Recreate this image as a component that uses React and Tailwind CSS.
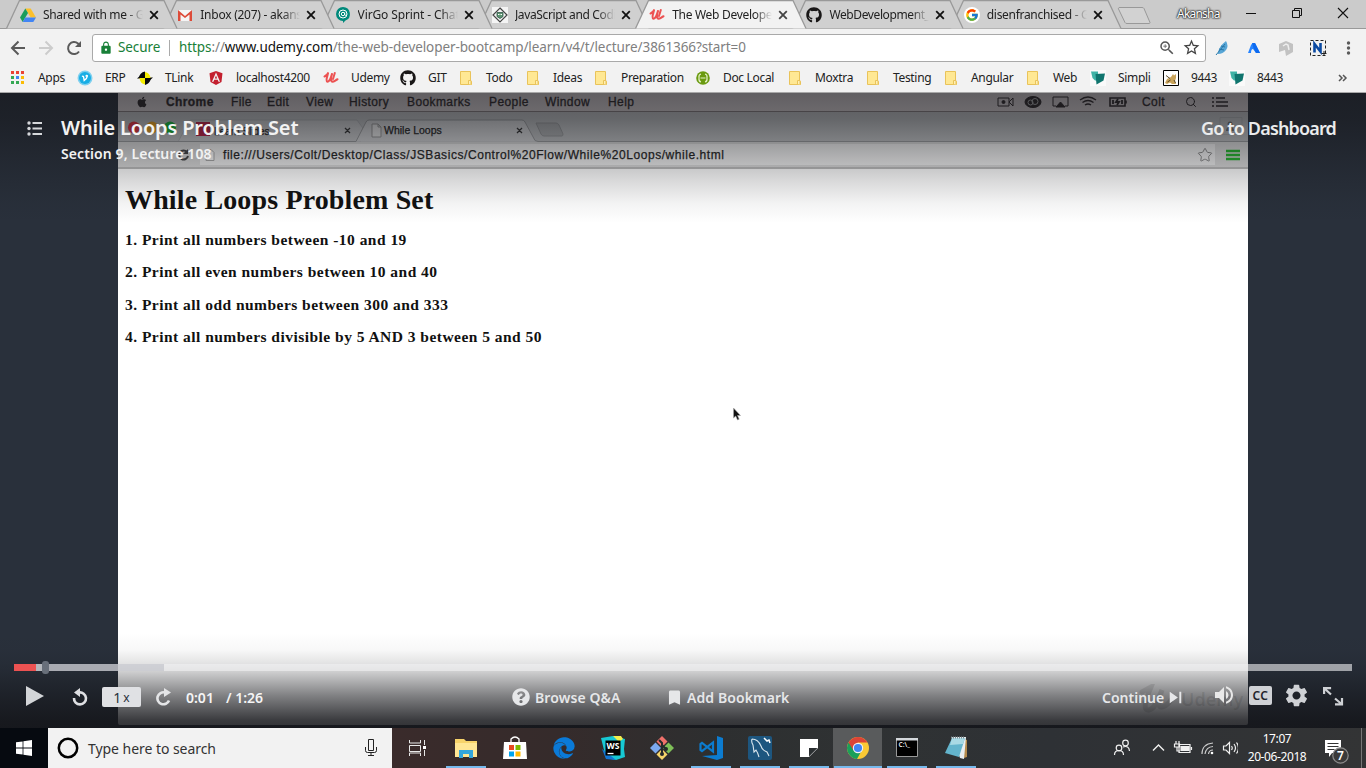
import React from "react";
import { FaGithub, FaAngular, FaQuestionCircle, FaEdge, FaApple } from "react-icons/fa";
import { FcGoogle } from "react-icons/fc";
import { MdSettings, MdBookmark, MdSkipNext, MdVolumeUp, MdZoomIn, MdStarBorder, MdLock } from "react-icons/md";
import { Search, Star } from "lucide-react";

/* ---------- small drawings ---------- */

const Drive = () => (
  <svg viewBox="0 0 16 16" className="size-4">
    <path d="M5.3 1.5h5.4L16 10.5h-5.3z" fill="#fbc02d" />
    <path d="M5.3 1.5 8 6 2.7 15 0 10.5z" fill="#1a9d5c" />
    <path d="M5.3 10.5H16L13.3 15H2.7z" fill="#4285f4" />
  </svg>
);
const Gmail = () => (
  <svg viewBox="0 0 16 16" className="size-4">
    <path d="M1 3h14v11H1z" fill="#f5f5f5" />
    <path d="M1 3 8 9l7-6v11h-2.5V7.5L8 11 3.500 7.500V14H1z" fill="#dd4b39" />
  </svg>
);
const Chat = () => (
  <svg viewBox="0 0 16 16" className="size-4">
    <path d="M8 0a7 7 0 0 1 2.500 13.500L8 16v-2A7 7 0 0 1 8 0z" fill="#00897b" />
    <circle cx="8" cy="7" r="4" fill="none" stroke="#fff" strokeWidth="1" />
    <circle cx="8" cy="7" r="1.700" fill="none" stroke="#fff" strokeWidth="1" />
    <path d="M9.700 5.500v2q.3 1.500 2 .5" fill="none" stroke="#fff" strokeWidth=".9" />
  </svg>
);
const Diamond = () => (
  <svg viewBox="0 0 16 16" className="size-4">
    <path d="M0 0h16v16H0z" fill="#f4f4f4" />
    <path d="M8 1 15 8 8 15 1 8z" fill="none" stroke="#444" strokeWidth="1.200" />
    <path d="M5 5.500h6v4l-3 2-3-2z" fill="#5c9471" stroke="#34584a" strokeWidth=".8" />
    <path d="M6 7.500h1.500M8.500 7.500H10" stroke="#fff" />
  </svg>
);
const UdemyU = () => (
  <svg viewBox="0 0 16 16" className="size-4">
    <path d="M1.500 6.500C3 5.500 4.600 4.500 5 3.200c-.8 3-2.600 8-.6 8.600 2 0 3.400-3.600 4.600-7.800-1 3-1.600 7.300.4 7.800 1.700 0 2.900-1.500 5.100-2.500" fill="none" stroke="#ec5252" strokeWidth="2.100" strokeLinecap="round" strokeLinejoin="round" />
    <path d="M11.800 3 10 9" stroke="#ec5252" strokeWidth="2" strokeLinecap="round" />
  </svg>
);
const GoogleG = () => (
  <span className="flex size-4 items-center justify-center rounded-full bg-white">
    <FcGoogle className="size-[14px]" />
  </span>
);
const Github = () => <FaGithub className="size-4 text-[#191717]" />;

const AppsGrid = () => (
  <svg viewBox="0 0 16 16" className="size-4">
    {["#ea4335", "#ea4335", "#ea4335", "#34a853", "#4285f4", "#fbbc05", "#34a853", "#34a853", "#fbbc05"].map((c, i) => (
      <rect key={i} x={1 + (i % 3) * 5} y={1 + Math.floor(i / 3) * 5} width="3" height="3" fill={c} />
    ))}
  </svg>
);
const Erp = () => (
  <svg viewBox="0 0 16 16" className="size-4">
    <circle cx="8" cy="8" r="7.500" fill="#7fd0ef" />
    <circle cx="8" cy="8" r="6" fill="#18aee5" />
    <path d="M5 6.500c1.500-1 1.500 0 2.200 4 1.500-1 3-3 3.200-4.500-.3-1-1.200-.5-1.600.5" fill="none" stroke="#fff" strokeWidth="1.400" />
  </svg>
);
const TLink = () => (
  <svg viewBox="0 0 16 16" className="size-4">
    <path d="M0 8.500 4 5v3.500zM16 7.500 12 11V7.500z" fill="#0a0a0a" />
    <path d="M8 8V2q5 1 5.500 6zM8 8v6.500Q3 13.500 2.500 8z" fill="#f5ee00" />
    <path d="M8 8V1.500Q2.500 2.500 2 8zM8 8v7q5-1.500 6-7z" fill="#0a0a0a" />
  </svg>
);
const Folder = () => (
  <svg viewBox="0 0 16 16" className="size-4">
    <path d="M2.500 1.500h10v9l1 1v3h-11z" fill="#ffe894" stroke="#e9c35a" />
    <path d="M10.500 14v-3.500h2.500v4" fill="#fff0b5" stroke="#e9c35a" />
  </svg>
);
const Doc = () => (
  <svg viewBox="0 0 16 16" className="size-4">
    <circle cx="8" cy="8" r="6.800" fill="#6a9a10" />
    <path d="M6 4Q3.500 4.500 4 8q-.5 3.500 2 4M10 4q2.500.5 2 4 .5 3.500-2 4M5.500 8h5" fill="none" stroke="#e6f3c8" strokeWidth="1.200" />
  </svg>
);
const Simpli = () => (
  <svg viewBox="0 0 16 16" className="size-4">
    <path d="M0 0h16v16H0z" fill="#fafafa" />
    <path d="M1 1.500h7v9H5L2.500 8z" fill="#3fb3a6" />
    <path d="M5.500 4 15 3.500l-1.500 7-7 4z" fill="#10756e" />
  </svg>
);
const Tomcat = () => (
  <svg viewBox="0 0 16 16" className="size-4">
    <path d="M.5.5h15v15H.5z" fill="#fff" stroke="#000" />
    <path d="M2 13l2-4 4-2 2-3 1 1.500 2-1.500v4l-1 3 1 3H9l-2-1.500L4 14z" fill="#c9a35a" />
    <path d="M3 5.500l4 3M4.500 12l3-2M11 10l1.500 3" stroke="#5c4a2a" />
  </svg>
);

/* ---------- browser chrome ---------- */

const TabShape = ({ active }) => (
  <svg viewBox="0 0 172 29" className="absolute top-0 left-0 h-[29px] w-[172px]">
    <path d="M.5 28.500 13.500.5H158L171 28.500z" fill={active ? "#f2f2f2" : "#d0d0d0"} />
    <path d="M.5 28.500 13.500.5H158L171 28.500" fill="none" stroke="#999" strokeWidth="1.300" />
  </svg>
);

const tabs = [
  { icon: <Drive />, label: "Shared with me - Google", z: "z-[7]", track: "tracking-[-0.32px]" },
  { icon: <Gmail />, label: "Inbox (207) - akansha", z: "z-[6]", track: "tracking-[-0.25px]" },
  { icon: <Chat />, label: "VirGo Sprint - Chat", z: "z-[5]", track: "tracking-[-0.12px]" },
  { icon: <Diamond />, label: "JavaScript and Coding", z: "z-[4]", track: "tracking-[-0.35px]" },
  { icon: <UdemyU />, label: "The Web Developer", z: "z-[8]", track: "tracking-[-0.3px]", active: true },
  { icon: <Github />, label: "WebDevelopment_", z: "z-[2]", track: "tracking-[-0.4px]" },
  { icon: <GoogleG />, label: "disenfranchised - Google", z: "z-[1]", track: "tracking-[-0.3px]" },
];

const Tab = ({ icon, label, z, active, track }) => (
  <div className={`relative h-[29px] w-[157.300px] shrink-0 ${z}`}>
    <TabShape active={active} />
    <div className="relative flex h-[29px] items-center pt-px pl-[14px]">
      <span className="shrink-0">{icon}</span>
      <span className={`ml-[7px] w-[101px] shrink-0 overflow-hidden whitespace-nowrap [mask-image:linear-gradient(to_right,#000_82%,transparent_99%)] ${track}`}>
        {label}
      </span>
      <svg viewBox="0 0 10 10" className="ml-[5px] size-[10px] shrink-0">
        <path d="M1.200 1.200 8.800 8.800M8.800 1.200 1.200 8.800" stroke={active ? "#444" : "#111"} strokeWidth="1.800" />
      </svg>
    </div>
  </div>
);

const TabStrip = () => (
  <div className="flex h-[29px] border-b border-[#999] bg-[#cbcbcb] pl-[6px] text-[12px] text-[#222]">
    {tabs.map((t) => (
      <Tab key={t.label} {...t} />
    ))}
    <svg viewBox="0 0 36 20" className="mt-[6px] ml-[10px] h-5 w-9 shrink-0">
      <path d="M2 1.500h23q1.500 0 2 1l6 14q0 1-1 1H10q-1.500 0-2-1L1.500 3q-.5-1 .5-1.500z" fill="#d2d2d2" stroke="#999" />
    </svg>
    <span className="mt-[5px] ml-[24px] w-[54px] shrink-0 text-[12px] leading-[18px] tracking-[-0.8px] text-white [text-shadow:0_0_2px_#000,0_0_2px_#333,0_0_2px_#333]">Akansha</span>
    <svg viewBox="0 0 110 28" className="ml-[10px] h-7 w-[110px] shrink-0" fill="none" stroke="#111">
      <path d="M5 13.500h10" />
      <path d="M51.500 10.500h7v7h-7zM53.500 10.500v-2h7v7h-2" />
      <path d="M97 8l10 10M107 8 97 18" strokeWidth="1.100" />
    </svg>
  </div>
);

const Toolbar = () => (
  <div className="flex h-[33px] items-center bg-[#f2f2f2] pt-[4px]">
    <svg viewBox="0 0 92 28" className="h-7 w-[92px] shrink-0" fill="none" strokeWidth="2">
      <path d="M25 14H12M18.500 7.500 12 14l6.500 6.500" stroke="#5a5a5a" />
      <path d="M39 14h13M45.500 7.500 52 14l-6.500 6.500" stroke="#ccc" />
      <path d="M79 17.500A6 6 0 1 1 78 9.500l1.500 1.500" stroke="#5a5a5a" />
      <path d="M81 7v6h-6z" fill="#5a5a5a" />
    </svg>
    <div className="flex h-7 w-[1114px] shrink-0 items-center rounded-[3px] border border-[#a9a9a9] bg-white pl-[6px] text-[14px]">
      <MdLock className="size-[14px] shrink-0 text-[#188038]" />
      <span className="ml-[5px] w-[51px] text-[13.500px] tracking-[-0.1px] text-[#188038]">Secure</span>
      <span className="h-4 w-px shrink-0 bg-[#aaa]" />
      <span className="ml-[9px] w-[969px] shrink-0 text-[13.500px] tracking-[-0.09px] whitespace-nowrap text-[#808080]">
        <span className="text-[#188038]">https</span>://<span className="text-[#111]">www.udemy.com</span>
        /the-web-developer-bootcamp/learn/v4/t/lecture/3861366?start=0
      </span>
      <MdZoomIn className="ml-[10px] size-[18px] shrink-0 text-[#555]" />
      <MdStarBorder className="ml-[6px] size-[19px] shrink-0 text-[#444]" />
    </div>
    <svg viewBox="0 0 160 28" className="h-7 w-[160px] shrink-0">
      <path d="M20 7q3 5 0 9-3 4-8 4 0-7 8-13z" fill="#58a6d6" />
      <path d="M10 21 19 10M13 15l5 1M15 12l4 1" stroke="#2877a8" fill="none" />
      <path d="M42 19l3-8q1-2 3-2h1l5 10h-4l-3-4q-2 0-2 4z" fill="#2684ff" />
      <path d="M46 9h3l5 10h-4l-2.500-5z" fill="#0d6af0" />
      <path d="M80 7l7 3v8l-7 4-1-6-6 2v-8z" fill="#c2c2c2" />
      <path d="M77 12l3-2 2 1 1 5" stroke="#eee" strokeWidth="1.500" fill="none" />
      <path d="M104.500 6.500h15v15h-15z" fill="none" stroke="#222" strokeDasharray="3 2" />
      <path d="M108.500 18.500V10l6 7.500V9" fill="none" stroke="#0b4aa2" strokeWidth="2.600" />
      <path d="M118 17v5M115.500 19.500h5" stroke="#222" />
      <g fill="#5a5a5a">
        <circle cx="142.500" cy="9" r="1.700" />
        <circle cx="142.500" cy="14" r="1.700" />
        <circle cx="142.500" cy="19" r="1.700" />
      </g>
    </svg>
  </div>
);

const bookmarks = [
  [<AppsGrid />, "Apps", "w-[67px]"],
  [<Erp />, "ERP", "w-[60px]"],
  [<TLink />, "TLink", "w-[71px]"],
  [<FaAngular className="size-4 text-[#c3202f]" />, "localhost4200", "w-[115px]"],
  [<UdemyU />, "Udemy", "w-[77px]"],
  [<Github />, "GIT", "w-[58px]"],
  [<Folder />, "Todo", "w-[67px]"],
  [<Folder />, "Ideas", "w-[68px]"],
  [<Folder />, "Preparation", "w-[102px]"],
  [<Doc />, "Doc Local", "w-[92px]"],
  [<Folder />, "Moxtra", "w-[78px]"],
  [<Folder />, "Testing", "w-[78px]"],
  [<Folder />, "Angular", "w-[82px]"],
  [<Folder />, "Web", "w-[65px]"],
  [<Simpli />, "Simpli", "w-[73px]"],
  [<Tomcat />, "9443", "w-[66px]"],
  [<Simpli />, "8443", "w-[109px]"],
];

const BookmarkBar = () => (
  <div className="flex h-[31px] items-center border-b border-[#a8a8a8] bg-[#f2f2f2] pt-[2px] pl-[10px] text-[12px] text-[#222]">
    {bookmarks.map(([icon, label, w], i) => (
      <div key={i} className={`flex shrink-0 items-center gap-3 whitespace-nowrap ${w}`}>
        <span className="shrink-0">{icon}</span>
        <span className="tracking-[-0.33px]">{label}</span>
      </div>
    ))}
    <svg viewBox="0 0 10 8" className="h-2 w-[10px]" fill="none" stroke="#555" strokeWidth="1.500">
      <path d="M1 1l3 3-3 3M5 1l3 3-3 3" />
    </svg>
  </div>
);

/* ---------- lecture recording ---------- */

const MacMenu = () => (
  <div className="flex h-[19px] items-center border-b border-[#8a8083] bg-[#ded6d8] pl-[18px] text-[12px] tracking-[0.4px] text-[#2b2527] [-webkit-text-stroke:0.3px_#2b2527]">
    <FaApple className="size-3" />
    <span className="ml-[18px] w-[65px] font-bold">Chrome</span>
    <span className="w-[36px]">File</span>
    <span className="w-[39px]">Edit</span>
    <span className="w-[43px]">View</span>
    <span className="w-[58px]">History</span>
    <span className="w-[82px]">Bookmarks</span>
    <span className="w-[56px]">People</span>
    <span className="w-[63px]">Window</span>
    <span className="w-[389px]">Help</span>
    <svg viewBox="0 0 134 16" className="h-4 w-[134px]" fill="none" stroke="#2b2527">
      <path d="M1 4h11v8H1zM12 8l4-4v8l-4-4" />
      <circle cx="6.500" cy="8" r="1.500" fill="#2b2527" />
      <ellipse cx="36" cy="8" rx="8" ry="5.500" fill="#2b2527" />
      <circle cx="33.500" cy="8.500" r="2.500" stroke="#bbb" />
      <circle cx="38" cy="7.500" r="3" stroke="#bbb" />
      <path d="M59 12h-3V3h15v9h-3" />
      <path d="M59 13l4.500-5 4.500 5z" fill="#2b2527" />
      <path d="M83 6q8-6 16 0M85.500 8.500q5.500-4 11 0M88 11q3-2 6 0" strokeWidth="1.400" />
      <path d="M113 4h15v8h-15zM129 6.500v3" strokeWidth="1.600" />
      <path d="M116 6v4M121 5l-2 3h3l-2 3M125 6v4" strokeWidth="1.800" />
    </svg>
    <span className="ml-[11px] w-[43px]">Colt</span>
    <Search className="size-3" />
    <svg viewBox="0 0 18 12" className="ml-[14px] h-3 w-[18px]" stroke="#2b2527" strokeWidth="1.500">
      <path d="M1 2h2M5 2h9M1 6h2M5 6h12M1 10h2M5 10h12" />
    </svg>
  </div>
);

const MacTabs = () => (
  <div className="relative h-[30px] bg-[#c4c6c8]">
    <svg viewBox="0 0 1130 30" className="absolute inset-0 h-[30px] w-[1130px]">
      <path d="M60 30 71 9q1-1 3-1h165l8 11-5 11z" fill="#cfd0d2" stroke="#b3b5b8" />
      <path d="M0 29.500h238L248 10q1-2 3-2h153q2 0 3 2l10 18.500 3 1h710" fill="#d9dadc" stroke="#9c9ea0" />
      <path d="M418 11h20q2 0 3 2l4 9q0 2-1 2h-18q-2 0-3-2z" fill="#b2b4b6" stroke="#9c9ea0" />
      <circle cx="16" cy="15.500" r="6" fill="#ef3340" />
      <circle cx="34" cy="15.500" r="6" fill="#f5a91e" />
      <circle cx="52" cy="15.500" r="6" fill="#12bf38" />
      <path d="M78 10h14v14H78z" fill="#c41f45" />
      <path d="M254 12h6l3 3v10h-9zM260 12v3h3" fill="#eee" stroke="#999" />
      <path d="M227 16l5 5M232 16l-5 5M399 16l5 5M404 16l-5 5" stroke="#333" strokeWidth="1.300" />
      <path d="M1102 5.500h22v17h-22z" fill="none" stroke="#b3b5b7" />
      <path d="M1108 19q0-4 4-4t4 4z" fill="#777" />
      <circle cx="1112" cy="12" r="2.500" fill="#777" />
    </svg>
    <div className="relative flex h-[30px] items-center pt-[8px] text-[10.500px] text-[#222] [-webkit-text-stroke:0.25px_#222]">
      <span className="ml-[96px] w-[170px] text-[10px]">Learn Slides</span>
      <span>While Loops</span>
    </div>
  </div>
);

const MacAddress = () => (
  <div className="flex h-[27px] items-center border-b-2 border-[#bcbcbc] bg-[#dcdcdc] pl-[22px]">
    <svg viewBox="0 0 60 16" className="h-4 w-[60px] shrink-0" fill="none" stroke="#c4c4c4" strokeWidth="2">
      <path d="M10 4 6 8l4 4M6 8h8M25 4l4 4-4 4M29 8h-8" />
      <path d="M47 5a4.500 4.500 0 1 0 1 4" stroke="#444" />
      <path d="M48 2v5h-5z" fill="#444" stroke="none" />
    </svg>
    <div className="flex h-[21px] w-[1015px] shrink-0 items-center bg-[#f2f2f2] pl-[5px]">
      <svg viewBox="0 0 10 12" className="h-3 w-[10px] shrink-0">
        <path d="M1 .5h5l3 3v8H1z" fill="#fff" stroke="#aaa" />
      </svg>
      <span className="ml-[8px] w-[974px] shrink-0 text-[12px] tracking-[0.56px] text-[#222] [-webkit-text-stroke:0.25px_#222]">
        file:///Users/Colt/Desktop/Class/JSBasics/Control%20Flow/While%20Loops/while.html
      </span>
      <Star className="size-4 shrink-0 text-[#888]" strokeWidth={1.5} />
    </div>
    <svg viewBox="0 0 14 12" className="ml-[11px] h-3 w-[14px] shrink-0" stroke="#24b52e" strokeWidth="2.500">
      <path d="M0 2h14M0 6h14M0 10h14" />
    </svg>
  </div>
);

const Recording = () => (
  <div className="h-[632px] w-[1130px] overflow-hidden rounded-b-[2px] bg-white font-['Liberation_Sans',Arial,sans-serif]">
    <MacMenu />
    <MacTabs />
    <MacAddress />
    <div className="pt-[13px] pl-[7px] font-['Liberation_Serif','Times_New_Roman',serif] font-bold text-[#111]">
      <h1 className="h-[48px] text-[28px] leading-[36px] tracking-[0.140px]">While Loops Problem Set</h1>
      <p className="h-[32.300px] text-[15.500px] leading-[20px] tracking-[0.47px]">1. Print all numbers between -10 and 19</p>
      <p className="h-[32.300px] text-[15.500px] leading-[20px] tracking-[0.47px]">2. Print all even numbers between 10 and 40</p>
      <p className="h-[32.300px] text-[15.500px] leading-[20px] tracking-[0.47px]">3. Print all odd numbers between 300 and 333</p>
      <p className="h-[32.300px] text-[15.500px] leading-[20px] tracking-[0.47px]">4. Print all numbers divisible by 5 AND 3 between 5 and 50</p>
    </div>
    <svg viewBox="0 0 10 14" className="mt-[48px] ml-[614px] h-[14px] w-[10px]">
      <path d="M1.500 1v10l2.200-2 1.800 4 1.700-.8-1.700-3.700h3z" fill="#111" stroke="#aaa" strokeWidth=".6" />
    </svg>
  </div>
);

/* ---------- player overlay ---------- */

const PlayerHeader = () => (
  <div className="flex h-[75px] justify-between pt-[23px] pr-[30px] pl-[27px]">
    <div className="flex">
      <svg viewBox="0 0 16 15" className="mt-[5px] h-[15px] w-4" fill="#d6d8db">
        <circle cx="2" cy="2" r="1.700" />
        <circle cx="2" cy="7.500" r="1.700" />
        <circle cx="2" cy="13" r="1.700" />
        <path d="M5.500 1H15v2H5.500zM5.500 6.500H15v2H5.500zM5.500 12H15v2H5.500z" />
      </svg>
      <div className="ml-[18px] whitespace-nowrap">
        <div className="text-[20px] leading-[24px] font-semibold tracking-[-0.17px] text-[#f2f2f2]">While Loops Problem Set</div>
        <div className="mt-[4px] text-[14px] leading-[20px] font-semibold tracking-[0.1px] text-[#f2f2f2]">Section 9, Lecture 108</div>
      </div>
    </div>
    <div className="text-[18px] leading-[24px] font-semibold tracking-[-0.84px] whitespace-nowrap text-[#eaebec]">Go to Dashboard</div>
  </div>
);

const Progress = () => (
  <div className="flex h-[13px] items-center px-[14px]">
    <div className="h-[7px] w-[22px] bg-[#ec5252]" />
    <div className="h-[7px] w-[6px] bg-[#b4b7bc]" />
    <div className="h-[13px] w-[7px] rounded-[3px] bg-[#686f7a]" />
    <div className="h-[7px] w-[115px] bg-[#caccd2]/80" />
    <div className="h-[7px] flex-1 bg-[#f2f2f4]/60" />
  </div>
);

const Controls = () => (
  <div className="flex h-10 items-center pl-[25px] text-[14px] font-semibold whitespace-nowrap text-[#e6e7e9]">
    <svg viewBox="0 0 20 20" className="-mt-[2px] size-5 shrink-0" fill="#d3d5d8">
      <path d="M1 0v20l18-10z" />
    </svg>
    <svg viewBox="0 0 18 18" className="ml-[26px] size-[18px] shrink-0" fill="none" stroke="#dedfe2" strokeWidth="2.600">
      <path d="M8 4.500A6 6 0 1 1 3 10" />
      <path d="M9 0v9L3 4.500z" fill="#dedfe2" stroke="none" />
    </svg>
    <div className="ml-[13px] flex h-5 w-[39px] shrink-0 items-center justify-center rounded-[2px] bg-[#e0e1e4] text-[14px] font-normal text-[#29303b]">
      1<span className="ml-[2px] pt-[2px] text-[12px]">x</span>
    </div>
    <svg viewBox="0 0 18 18" className="ml-[14px] size-[18px] shrink-0" fill="none" stroke="#e4e5e7" strokeWidth="2.600">
      <path d="M10 4.500A6 6 0 1 0 14 12.500" />
      <path d="M9 0v9l7-4.500z" fill="#e4e5e7" stroke="none" />
    </svg>
    <span className="ml-[13px] w-[40px] text-[#f5f5f5]">0:01</span>
    <span className="w-[286px] text-[#f5f5f5]">/ 1:26</span>
    <FaQuestionCircle className="size-[18px] shrink-0" />
    <span className="ml-[5px] w-[130px] tracking-[0.1px]">Browse Q&amp;A</span>
    <MdBookmark className="size-[19px] shrink-0" />
    <span className="ml-[3px] w-[415px] tracking-[0.1px]">Add Bookmark</span>
    <span className="w-[62px]">Continue</span>
    <MdSkipNext className="size-[23px] shrink-0" />
    <span className="w-[25px]" />
    <MdVolumeUp className="-mt-[4px] size-6 shrink-0 text-[#e8e8e8]" />
    <div className="-mt-[3px] ml-[13px] flex h-[19px] w-[23px] shrink-0 items-center justify-center rounded-[2px] bg-[#cfd1d5] text-[12px] leading-none tracking-[0.5px] text-[#1f232a]">CC</div>
    <MdSettings className="-mt-[3px] ml-[11px] size-[27px] shrink-0 text-[#cfd1d5]" />
    <svg viewBox="0 0 22 20" className="-mt-[3px] ml-[12px] h-5 w-[22px] shrink-0" fill="none" stroke="#cfd1d5" strokeWidth="2.200">
      <path d="M2.100 8V2.100h7M2.500 2.500 9 8.500M20 12v6.400h-7M19.500 18 13 12.500" />
    </svg>
  </div>
);

const Player = () => (
  <div className="relative h-[635px] overflow-hidden bg-[#29303b]">
    <div className="flex justify-center">
      <Recording />
    </div>
    <div className="absolute inset-0 flex flex-col justify-between">
      <div className="h-[130px] bg-[linear-gradient(to_bottom,rgba(20,21,25,.62)_0%,rgba(20,21,25,.54)_20%,rgba(20,21,25,.29)_50%,rgba(20,21,25,.16)_68%,rgba(20,21,25,.05)_85%,transparent)]">
        <PlayerHeader />
      </div>
      <div className="h-[95px] bg-[linear-gradient(to_bottom,transparent,rgba(20,21,25,.03)_18%,rgba(20,21,25,.12)_32%,rgba(20,21,25,.2)_40%,rgba(20,21,25,.54)_66%,rgba(20,21,25,.84)_92%,rgba(20,21,25,.88))] pt-[28px]">
        <Progress />
        <div className="relative">
          <div className="absolute top-[10px] left-[1139px] flex items-center gap-[8px] text-[18px] font-semibold text-black/10">
            <svg viewBox="0 0 34 30" className="h-[30px] w-[34px]" fill="none" stroke="currentColor" strokeWidth="5" strokeLinecap="round">
              <path d="M3 8 12 3C7 15 3 27 10 26S20 12 23 6c-3 9-5 18 0 17q5-1 9-7" />
            </svg>
            Udemy
          </div>
          <div className="relative pt-[3px]">
            <Controls />
          </div>
        </div>
      </div>
    </div>
  </div>
);

/* ---------- taskbar ---------- */

const apps = [
  {
    icon: (
      <g fill="none" stroke="#e8e8e8">
        <path d="M8.500 8v3h11V8M8.500 24v-3h11v3M8.500 13.500h11v6h-11zM23.500 8v5M23.500 18v6" />
        <path d="M22 14h3v3h-3z" fill="#fff" stroke="none" />
      </g>
    ),
  },
  {
    run: true,
    icon: (
      <g>
        <path d="M5 7h9l2 2h11v16H5z" fill="#f7d36a" />
        <path d="M5 11h22v14H5z" fill="#ffe694" />
        <path d="M9 26v-8h14v8h-4v-4h-6v4z" fill="#33a6dc" />
      </g>
    ),
  },
  {
    icon: (
      <g>
        <path d="M12 11V7q4-4 8 0v4" fill="none" stroke="#fff" strokeWidth="1.300" />
        <path d="M5 10h22l1 17H4z" fill="#fff" />
        <path d="M10 13h5v5h-5z" fill="#e64a22" />
        <path d="M16.500 13h5v5h-5z" fill="#7fba00" />
        <path d="M10 19.500h5v5h-5z" fill="#00a4ef" />
        <path d="M16.500 19.500h5v5h-5z" fill="#ffb900" />
      </g>
    ),
  },
  { edge: true },
  {
    icon: (
      <g>
        <path d="M4 6 16 4l12 3-1 10 1 8-9 3-10-2z" fill="#17c9d4" />
        <path d="M16 4h8l2 3-4 3z" fill="#f3ee4e" />
        <path d="M5 17 9 27l10 1z" fill="#1276d6" />
        <path d="M8.500 8.500h15v15h-15z" fill="#000" />
        <path d="M10.500 21.500h6" stroke="#fff" strokeWidth="1.300" />
        <text x="9.500" y="17" fontSize="8.500" fontWeight="700" fill="#fff">WS</text>
      </g>
    ),
  },
  {
    icon: (
      <g>
        <path d="M16 4l5.500 5.500L16 15l-5.500-5.500z" fill="#f0716b" />
        <path d="M9.500 10.500 15 16l-5.500 5.500L4 16z" fill="#7ba9f0" />
        <path d="M22.500 10.500 28 16l-5.500 5.500L17 16z" fill="#7fbf58" />
        <path d="M16 17l5.500 5.500L16 28l-5.500-5.500z" fill="#f7d56a" />
        <path d="M13 8l3 3v11M16 13l4 4" fill="none" stroke="#26292b" strokeWidth="2" />
        <circle cx="16" cy="22" r="2" fill="#26292b" />
        <circle cx="20" cy="17" r="2" fill="#26292b" />
      </g>
    ),
  },
  {
    run: true,
    icon: (
      <g>
        <path d="M22 4l6 2v20l-6 2-15-4 15-1z" fill="#0c7cd0" />
        <path d="M18 10.500v9L7 10.800 5.500 12v6L7 19.200z" fill="none" stroke="#0c7cd0" strokeWidth="2.200" />
      </g>
    ),
  },
  {
    run: true,
    icon: (
      <g>
        <rect x="4" y="4" width="24" height="24" rx="2" fill="#1d567f" />
        <path d="M8 7q6 0 9 7 1 4 6 6l2 4M8 7q-1 3 1 6l1 7 2-2q2 3 3 7" fill="none" stroke="#d9e6ee" strokeWidth="1.100" />
        <path d="M20 6l3 3 2-1 1 3" stroke="#fff" strokeWidth="1.500" fill="none" />
      </g>
    ),
  },
  {
    run: true,
    icon: (
      <g>
        <path d="M7 7h18v9l-9 9H7z" fill="#fff" />
        <path d="M16 16h8.500L16 24.500z" fill="#2b2f31" />
      </g>
    ),
  },
  {
    run: true,
    active: true,
    icon: (
      <g>
        <circle cx="16" cy="16" r="11" fill="#fbc934" />
        <path d="M6.500 10.500A11 11 0 0 0 15 27l5-9-4-2z" fill="#1b9f5a" />
        <path d="M6.500 10.500A11 11 0 0 1 25.500 10.500H16l-4.500 8z" fill="#dc4437" />
        <circle cx="16" cy="16" r="5.200" fill="#f4f4f4" />
        <circle cx="16" cy="16" r="4.100" fill="#4285f4" />
      </g>
    ),
  },
  {
    run: true,
    icon: (
      <g>
        <path d="M5.500 6.500h21v18h-21z" fill="#000" stroke="#999" />
        <path d="M5 6h22v2.500H5z" fill="#d4d8dc" />
        <text x="7.500" y="15" fontSize="6.500" fontWeight="700" fill="#ddd">C:\_</text>
      </g>
    ),
  },
  {
    run: true,
    icon: (
      <g>
        <path d="M24 7l3 1v17l-3 1z" fill="#b48a4c" />
        <path d="M12 5h14l-2 22-4-1z" fill="#e9eef0" />
        <path d="M12 6h13l-6 19L5 21z" fill="#63b4cc" />
        <path d="M12 6h13l-2 6-13 1z" fill="#a9d9e4" />
        <path d="M11 5.500h14" stroke="#7b8a90" strokeDasharray="1 1" strokeWidth="2" />
      </g>
    ),
  },
];

const TaskApp = ({ icon, run, active, edge }) => (
  <div className={`flex h-10 w-[49px] shrink-0 flex-col items-center justify-between ${active ? "bg-[#595b5c]" : ""}`}>
    {edge ? (
      <FaEdge className="mt-[9px] size-[22px] text-[#0a7ad8]" />
    ) : (
      <svg viewBox="0 0 32 32" className="mt-[4px] size-8">{icon}</svg>
    )}
    <div className={`h-[2px] ${active ? "w-[48px]" : "w-10"} ${run ? "bg-[#76b9ed]" : ""}`} />
  </div>
);

const Taskbar = () => (
  <div className="flex h-10 bg-[linear-gradient(to_right,#3a2b2b_392px,#352b2b_560px,#2d2f30_720px,#2f3233_860px,#2e3135_1050px,#333435_1366px)]">
    <div className="flex w-12 shrink-0 items-center justify-center bg-[#060a10]">
      <svg viewBox="0 0 16 16" className="size-4" fill="#fff">
        <path d="M0 2.300 6.600 1.400v6.200H0zM7.400 1.300 16 0v7.600H7.400zM0 8.400h6.600v6.200L0 13.700zM7.400 8.400H16V16l-8.600-1.200z" />
      </svg>
    </div>
    <div className="flex w-[344px] shrink-0 items-center bg-[#f2f2f2] pl-[9px]">
      <svg viewBox="0 0 22 22" className="size-[22px]" fill="none" stroke="#000" strokeWidth="2.500">
        <circle cx="11" cy="11" r="9.200" />
      </svg>
      <span className="ml-[9px] w-[277px] text-[14px] tracking-[-0.05px] text-[#333]">Type here to search</span>
      <svg viewBox="0 0 12 18" className="h-[18px] w-3" fill="none" stroke="#222">
        <path d="M3.500.5h5v11h-5zM.5 8v3.500q0 2 2 2h7q2 0 2-2V8M6 13.500v3M3 16.500h6" />
      </svg>
    </div>
    {apps.map((a, i) => (
      <TaskApp key={i} {...a} />
    ))}
    <svg viewBox="0 0 128 40" className="ml-[130px] h-10 w-[128px] shrink-0" fill="none" stroke="#f0f0f0" strokeWidth="1.200">
      <circle cx="9" cy="20" r="2.800" />
      <path d="M4.500 27q0-4.500 4.500-4.500t4.500 4.500" />
      <circle cx="15.500" cy="15" r="2.800" />
      <path d="M13 19q6-2 6.500 4" />
      <path d="M43 22.500l5.500-5.500 5.500 5.500" strokeWidth="1.400" />
      <path d="M69 16.500h11v8H69zM81.500 19v3" />
      <path d="M71 18.500h8v4h-8z" fill="#f0f0f0" />
      <path d="M66 13v3M69 13v3M64.500 16h5v3h-5zM67 19v4h3" />
      <path d="M92 26q0-10 11-11M95 26q1-7 8-7.500M98.500 26q.5-4 4.500-4" opacity=".8" />
      <circle cx="102" cy="25" r="1.300" fill="#fff" stroke="none" />
      <path d="M113.500 18h2.500l3.500-3.500v11L116 22h-2.500zM121.500 18q1.500 2 0 4M124 16q3 4 0 8M126.500 14.500q4 5.500 0 11" />
    </svg>
    <div className="flex w-[78px] shrink-0 flex-col items-center justify-center text-[12px] leading-[18px] tracking-[-0.4px] whitespace-nowrap text-white">
      <span>17:07</span>
      <span>20-06-2018</span>
    </div>
    <svg viewBox="0 0 50 40" className="h-10 w-[50px] shrink-0">
      <path d="M9 12h16v13h-9l-3 4v-4H9z" fill="#fff" />
      <path d="M11.500 15.500h11M11.500 18.500h11M11.500 21.500h7" stroke="#333" />
      <circle cx="24.500" cy="27.500" r="7.700" fill="#3a3a3a" stroke="#8c8c8c" strokeWidth="1.200" />
      <text x="24.500" y="32" fontSize="12" fontWeight="600" textAnchor="middle" fill="#fff">7</text>
      <path d="M45.500 0v40" stroke="#777" />
    </svg>
  </div>
);

export default function App() {
  return (
    <div className="h-[768px] w-[1366px] overflow-hidden font-['Noto_Sans','Open_Sans',sans-serif]">
      <TabStrip />
      <Toolbar />
      <BookmarkBar />
      <Player />
      <Taskbar />
    </div>
  );
}
